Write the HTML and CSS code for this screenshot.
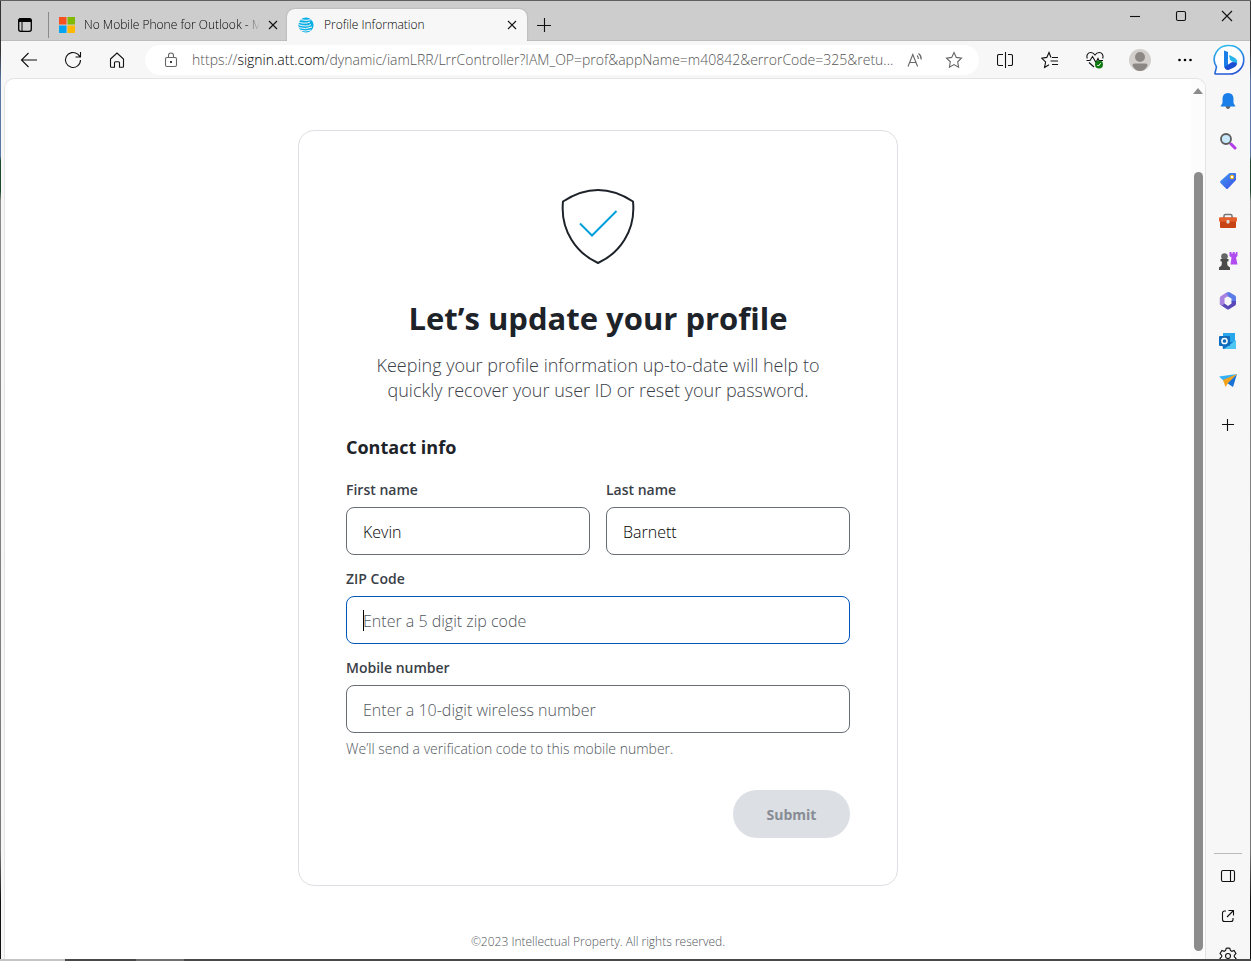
FILE: index.html
```html
<!doctype html>
<html lang="en">
<head>
	<meta charset="UTF-8">
	<title>Profile Information</title>
	<link rel="stylesheet" href="styles.css">
</head>
<body>
	<div class="window">
		<header class="titlebar">
			<button class="tab-menu" type="button" aria-label="Tab actions menu">
				<svg width="16" height="16" viewBox="0 0 16 16"><rect x="1.7" y="1.7" width="12.6" height="12.6" rx="2" fill="none" stroke="#000" stroke-width="1.3"/><path d="M1.5 5V3.2a2 2 0 0 1 2-2h9a2 2 0 0 1 2 2V5z"/><path d="M5 5v9" stroke="#000"/></svg>
			</button>
			<div class="tab">
				<svg width="16" height="16" viewBox="0 0 16 16"><path fill="#f65220" d="M0 0h7.5v7.5H0z"/><path fill="#80bb03" d="M8.500 0H16v7.500H8.500z"/><path fill="#04a4f0" d="M0 8.500h7.500V16H0z"/><path fill="#ffb902" d="M8.500 8.500H16V16H8.500z"/></svg>
				<span class="tab-title fade">No Mobile Phone for Outlook - M</span>
				<button type="button" aria-label="Close tab"><svg width="10" height="10" viewBox="0 0 10 10"><path class="line" d="M1 1l8 8M9 1L1 9"/></svg></button>
			</div>
			<div class="tab active">
				<svg width="16" height="16" viewBox="0 0 16 16"><defs><clipPath id="globe"><circle cx="8" cy="8" r="7.600"/></clipPath></defs><g clip-path="url(#globe)"><rect width="16" height="16" fill="#0aafe6"/><path fill="none" stroke="#f7f7f7" d="M2 2.600q6 1.500 12 0M-1 4.600q8 3 13 .4M0 7.500q9 3 13 0M0 10.500q8 2.500 14-.5M1 13q7 2 12 0"/></g></svg>
				<span class="tab-title">Profile Information</span>
				<button type="button" aria-label="Close tab"><svg width="10" height="10" viewBox="0 0 10 10"><path class="line" d="M1 1l8 8M9 1L1 9"/></svg></button>
			</div>
			<button class="new-tab" type="button" aria-label="New tab"><svg width="14" height="14" viewBox="0 0 14 14"><path class="line" d="M7.500 0v14M0 7.500h14"/></svg></button>
			<div class="window-buttons">
				<button type="button" aria-label="Minimize"><svg width="12" height="12" viewBox="0 0 12 12"><path class="line" d="M1 6.500h10"/></svg></button>
				<button type="button" aria-label="Maximize"><svg width="12" height="12" viewBox="0 0 12 12"><rect class="line" x="1.500" y="1.500" width="9" height="9" rx="1.500"/></svg></button>
				<button type="button" aria-label="Close"><svg width="12" height="12" viewBox="0 0 12 12"><path class="line" d="M1 1l10 10M11 1L1 11"/></svg></button>
			</div>
		</header>

		<nav class="toolbar">
			<button class="nav" type="button" aria-label="Back"><svg width="18" height="16" viewBox="0 0 18 16"><path class="line" d="M17 8H1.500M8.500 1L1.500 8l7 7"/></svg></button>
			<button class="nav" type="button" aria-label="Refresh"><svg width="18" height="18" viewBox="0 0 18 18"><path class="line" d="M16.500 9A7.500 7.500 0 1 1 13.800 3.200L16 5.500M16.500 1v5h-5"/></svg></button>
			<button class="nav" type="button" aria-label="Home"><svg width="16" height="16" viewBox="0 0 16 16"><path class="line" d="M1.500 7L8 1l6.500 6v7.500a.8.8 0 0 1-.8.8h-3.200v-4.500a1 1 0 0 0-1-1h-3a1 1 0 0 0-1 1v4.500H2.300a.8.8 0 0 1-.8-.8z"/></svg></button>
			<div class="address">
				<button type="button" aria-label="View site information"><svg width="14" height="16" viewBox="0 0 14 16"><rect class="line" x="1.500" y="5.500" width="11" height="9" rx="1.500"/><path class="line" d="M4.500 5.500V3.500a2.500 2.500 0 0 1 5 0v2"/><circle cx="7" cy="10" r="1"/></svg></button>
				<div class="url" role="textbox" aria-label="Address">https://<b>signin.att.com</b>/dynamic/iamLRR/LrrController?IAM_OP=prof&amp;appName=m40842&amp;errorCode=325&amp;retu...</div>
				<button type="button" aria-label="Read aloud"><svg width="16" height="16" viewBox="0 0 16 16"><path class="line" d="M1 14.500L5.800 2.500l4.800 12M2.700 10.500h6.200M10 3.500q1.500 1.200 1.300 3.500M11.500 1.500q3 2.300 2.700 6"/></svg></button>
				<button type="button" aria-label="Add to favorites"><svg width="18" height="18" viewBox="0 0 18 18"><path class="line" d="M9 1.500l2.300 4.900 5.200.7-3.800 3.700.9 5.400L9 13.600l-4.600 2.600.9-5.400-3.800-3.700 5.200-.7z"/></svg></button>
			</div>
			<button type="button" aria-label="Split screen"><svg width="16" height="16" viewBox="0 0 16 16"><path class="line" d="M8.500 0v16M6 2.500H2a1.500 1.500 0 0 0-1.500 1.500v8A1.500 1.500 0 0 0 2 13.500h4M11 2.500h3A1.500 1.500 0 0 1 15.500 4v8a1.500 1.500 0 0 1-1.500 1.500h-3"/></svg></button>
			<button type="button" aria-label="Favorites"><svg width="18" height="18" viewBox="0 0 18 18"><path class="line" d="M10 6.500L8 1.500 5.800 6.400.7 7.200l3.900 3.700-1 5.500L8 13.700M11 6.500h6M9.500 10h7.500M11 13.500h6"/></svg></button>
			<button type="button" aria-label="Browser essentials"><svg width="18" height="18" viewBox="0 0 18 18"><path class="line" d="M1.300 7.500C0 4 2 1.500 4.800 1.500 7 1.500 8.300 3 9 4c.7-1 2-2.500 4.200-2.500 2.800 0 4.500 2.500 3.500 6M.5 9.500h3.500l2.500-4 3.500 6 2-4 1 2h4M3 11.500l5 4.500"/><circle cx="13" cy="13.500" r="4" fill="#0f7b10"/><path d="M11.300 14l1 1 2.500-2.800" fill="none" stroke="#fff"/></svg></button>
			<button type="button" aria-label="Profile"><svg width="22" height="22" viewBox="0 0 22 22"><circle cx="11" cy="11" r="11" fill="#d2cfcc"/><circle cx="11" cy="8" r="5" fill="#8c8885"/><path fill="#8c8885" d="M3.500 16.500q0-2 2-2h11q2 0 2 2Q16 22 11 22t-7.500-5.500z"/></svg></button>
			<button type="button" aria-label="Settings and more"><svg width="14" height="4" viewBox="0 0 14 4"><circle cx="1.500" cy="2" r="1.300"/><circle cx="7" cy="2" r="1.300"/><circle cx="12.500" cy="2" r="1.300"/></svg></button>
			<button class="bing" type="button" aria-label="Bing"><svg width="32" height="32" viewBox="0 0 32 32"><defs><linearGradient id="bubble" x2="0.300" y2="1"><stop stop-color="#2bc3ee"/><stop offset="1" stop-color="#2757d8"/></linearGradient></defs><path fill="#fff" stroke="url(#bubble)" stroke-width="1.600" d="M16.500 1.500a14 14 0 1 1 0 28.500H2.500Q1.500 30 2 29l1.500-6A14 14 0 0 1 16.500 1.500z"/><path fill="#1c7fe8" d="M11 6.500l4 1.500v13l-1.500 4q-2.500-.5-2.500-4z"/><path fill="#27b6ec" d="M16 11.500q.500-.5 1.500 0l4.500 2.500q3 2 2 6l-5.500-3q-1-.5-1.500-1.500z"/><path fill="#1b50d2" d="M11.500 23l7.500-5q5 0 5 2-.5 2.500-3 3.500L16 25.800q-3.500 1-4.500-2.800z"/></svg></button>
		</nav>

		<div class="body">
			<div class="viewport">
				<main class="page">
					<form class="card">
						<svg class="shield" width="76" height="76" viewBox="0 0 76 76"><path fill="none" stroke="#1d2329" stroke-width="2" stroke-linejoin="round" d="M3 13.500Q38-9.500 73 13.500C76 43 59 65.500 38 75 17 65.500 0 43 3 13.500z"/><path fill="none" stroke="#009fdb" stroke-width="2" d="M20 35.500L32 47.500 56.500 23"/></svg>
						<h1>Let’s update your profile</h1>
						<p class="lead">Keeping your profile information up-to-date will help to<br>quickly recover your user ID or reset your password.</p>
						<h2>Contact info</h2>
						<div class="fields">
							<div class="field">
								<label for="first">First name</label>
								<input id="first" type="text" value="Kevin">
							</div>
							<div class="field">
								<label for="last">Last name</label>
								<input id="last" type="text" value="Barnett">
							</div>
							<div class="field wide focused">
								<label for="zip">ZIP Code</label>
								<input id="zip" type="text" placeholder="Enter a 5 digit zip code">
								<span class="caret"></span>
							</div>
							<div class="field wide">
								<label for="mobile">Mobile number</label>
								<input id="mobile" type="tel" placeholder="Enter a 10-digit wireless number">
							</div>
						</div>
						<p class="hint">We’ll send a verification code to this mobile number.</p>
						<button class="submit" type="submit" disabled>Submit</button>
					</form>
					<footer>©2023 Intellectual Property. All rights reserved.</footer>
				</main>
				<div class="scrollbar">
					<svg width="10" height="6" viewBox="0 0 10 6"><path fill="#8b8b8b" d="M5 0l5 6H0z"/></svg>
					<div class="thumb"></div>
				</div>
			</div>

			<aside class="sidebar">
				<button type="button" aria-label="Notifications"><svg width="18" height="18" viewBox="0 0 18 18"><path fill="#666" d="M6.500 14h5q-.5 3-2.500 3t-2.500-3z"/><path fill="#1b7fea" d="M9 1q5.500 0 5.500 6v4l2 3.500h-15L3.500 11V7q0-6 5.500-6z"/></svg></button>
				<button type="button" aria-label="Search"><svg width="18" height="18" viewBox="0 0 18 18"><path stroke="#b13be8" stroke-width="3" stroke-linecap="round" d="M12 12l4 4"/><circle cx="7" cy="7" r="5" fill="#c9e8fb" stroke="#5c5c5c" stroke-width="1.800"/></svg></button>
				<button type="button" aria-label="Shopping"><svg width="18" height="18" viewBox="0 0 18 18"><defs><linearGradient id="tag" y2="1"><stop stop-color="#3f9bf2"/><stop offset="1" stop-color="#3f4be8"/></linearGradient></defs><path fill="url(#tag)" d="M10.500 1H16q1 0 1 1v6L9 16.500q-1 1-2 0L1.500 11q-1-1 0-2z"/><circle cx="13" cy="5" r="1.800" fill="#fff" stroke="#f5b800"/></svg></button>
				<button type="button" aria-label="Tools"><svg width="18" height="16" viewBox="0 0 18 16"><path fill="none" stroke="#777" stroke-width="1.500" d="M5 5V3q0-1.500 1.500-1.500h5Q13 1.500 13 3v2"/><rect x="1" y="4.500" width="16" height="10.500" rx="1" fill="#c74315"/><path fill="#e4602c" d="M0 4.500h18v4H0z"/><rect x="7.500" y="7" width="3" height="3.500" rx="1" fill="#ddd"/></svg></button>
				<button type="button" aria-label="Games"><svg width="20" height="18" viewBox="0 0 20 18"><path fill="#b04cf0" d="M11.500 0h2v1.500h1.200V0h2v1.500h1.200V0h1.600v4L18 5.500l1.500 7h-7l1-7-2-1.500z"/><circle cx="6.500" cy="4.500" r="3.300" fill="#666"/><path fill="#4a4a4a" d="M2.500 7h8v2.500H9l.5 4 2.500 2V18H1v-2.500l2.500-2 .5-4H2.500z"/></svg></button>
				<button type="button" aria-label="Microsoft 365"><svg width="18" height="18" viewBox="0 0 18 18"><path fill="#5a7be8" d="M6.500 1L9 .2q1-.4 2 .2l5 3q1 .7 1 2v7l-4.500-3V6.500L8 4z"/><path fill="#a884e0" d="M7.500.6L2 4Q.8 5 .8 6v6.500l2 1.200 2.700-1.700V6.300L9 4z"/><path fill="#5848b8" d="M1 12.500l7 4.700q1 .6 2 0l6.500-4q.5-.8.5-4.200l-4.500 0v2.500L9 14l-3.500-2.500-2.500 2z"/></svg></button>
				<button type="button" aria-label="Outlook"><svg width="18" height="18" viewBox="0 0 18 18"><rect x="4" y="1" width="12" height="10" fill="#28a8ea"/><path fill="#1272c4" d="M3 10h14v7H4z"/><path fill="#4fc5f4" d="M9 14l8-6v8.500q0 .5-.5.5H5z"/><rect y="4" width="11" height="10" rx="1" fill="#0f6cbd"/><circle cx="5.500" cy="9" r="2.600" fill="none" stroke="#fff" stroke-width="1.500"/></svg></button>
				<button type="button" aria-label="Drop"><svg width="18" height="14" viewBox="0 0 18 14"><path fill="#35b0f5" d="M0 2.500L18 0 5 7z"/><path fill="#1672d8" d="M18 0l-4 13-6-4z"/><path fill="#f5a21b" d="M18 0L4 6l2.500 7L9 9z"/></svg></button>
				<button class="customize" type="button" aria-label="Customize"><svg width="12" height="12" viewBox="0 0 12 12"><path class="line" d="M5.500 0v12M0 5.500h12"/></svg></button>
				<div class="sidebar-end">
					<hr>
					<button type="button" aria-label="Hide sidebar"><svg width="16" height="14" viewBox="0 0 16 14"><rect class="line" x="1.500" y="1.500" width="13" height="11" rx="1.500"/><path class="line" d="M10.500 1.500v11"/></svg></button>
					<button type="button" aria-label="Open link"><svg width="14" height="14" viewBox="0 0 14 14"><path class="line" d="M5 2H3.500a2 2 0 0 0-2 2v6.500a2 2 0 0 0 2 2H10a2 2 0 0 0 2-2V9M7.500 1.500h5v5M12.500 1.500L6 8"/></svg></button>
					<button type="button" aria-label="Settings"><svg width="18" height="18" viewBox="0 0 18 18"><path class="line" d="M9 1l1.800.3.6 2.200 1.500.8 2.200-.8L17 6.600l-1.700 1.600v1.600L17 11.400l-1.900 3.100-2.200-.8-1.500.8-.6 2.200H7.200l-.6-2.200-1.500-.8-2.200.8L1 11.400l1.700-1.600V8.200L1 6.600l1.900-3.100 2.200.8 1.500-.8.600-2.200z"/><circle class="line" cx="9" cy="9" r="2.500"/></svg></button>
				</div>
			</aside>
		</div>
		<div class="bottom-edge"></div>
	</div>
</body>
</html>
```
FILE: styles.css
```css
*{
	box-sizing: border-box;
}
body{
	margin: 0;
	height: 100vh;
	padding-bottom: 18px;
	background: #fff;
	font-family: "Open Sans", "Noto Sans", sans-serif;
	font-weight: 330;
	overflow: hidden;
}
h1,h2,p{
	margin: 0;
}
button{
	display: flex;
	align-items: center;
	justify-content: center;
	flex-shrink: 0;
	padding: 0;
	border: 0;
	background: none;
	font-family: inherit;
	color: #111;
}
svg{
	display: block;
	flex-shrink: 0;
}
.line{
	fill: none;
	stroke: currentColor;
	stroke-width: 1.1;
}
.window{
	display: flex;
	flex-direction: column;
	height: 100%;
	padding: 0 1px;
	border-top: 1px solid #625f62;
	background: linear-gradient(#333 50px, #5a78a5 80px, #5a78a5 155px, #1d4a2c 160px, #1d4a2c 190px, #8a8a8a 200px, #777 850px, #111 900px);
}

/* tabs */
.titlebar{
	display: flex;
	height: 40px;
	flex-shrink: 0;
	background: #cdcdcd;
	border-bottom: 1px solid #bdbdbd;
}
.tab-menu{
	width: 47px;
	padding-top: 8px;
}
.tab{
	display: flex;
	align-items: center;
	gap: 10px;
	width: 240px;
	height: 32px;
	margin-top: 8px;
	padding: 0 8px 0 11px;
	font-size: 12px;
	line-height: 18px;
	color: #000;
}
.tab:not(.active){
	gap: 9px;
	width: 239px;
	height: 26px;
	margin-top: 11px;
	padding: 0 7px 0 10px;
	border-left: 1px solid #8a8a8a;
}
.tab.active{
	background: #f7f7f7;
	border-radius: 8px 8px 0 0;
	box-shadow: 0 0 2px #999;
	clip-path: inset(-3px -3px 0 -3px);
}
.tab-title{
	flex: 1;
	white-space: nowrap;
	overflow: hidden;
}
.fade{
	margin-right: -4px;
	-webkit-mask-image: linear-gradient(to left, transparent, #000 14px);
	mask-image: linear-gradient(to left, transparent, #000 14px);
}
.tab button{
	width: 15px;
	height: 16px;
}
.new-tab{
	width: 34px;
	padding-top: 8px;
}
.window-buttons{
	display: flex;
	height: 30px;
	margin-left: auto;
}
.window-buttons button{
	width: 46px;
}

/* toolbar */
.toolbar{
	display: flex;
	align-items: center;
	height: 37px;
	flex-shrink: 0;
	padding-left: 6px;
	background: #f7f7f7;
}
.toolbar > button{
	width: 45px;
	height: 36px;
}
.toolbar > .nav{
	width: 44px;
}
.toolbar > .bing{
	width: 43px;
}
.address{
	display: flex;
	align-items: center;
	flex: 1;
	min-width: 0;
	height: 30px;
	margin: 0 3px 0 6px;
	padding: 0 6px;
	border-radius: 15px;
	background: #fff;
}
.address button{
	width: 39px;
	height: 30px;
	color: #666;
}
.url{
	flex: 1;
	margin: 0 0 0 2px;
	font-size: 14px;
	font-weight: 300;
	line-height: 20px;
	color: #555;
	white-space: nowrap;
}
.url b{
	font-weight: inherit;
	color: #000;
}

/* page area */
.body{
	display: flex;
	flex: 1;
	min-height: 0;
	background: #f7f7f7;
}
.viewport{
	display: flex;
	flex: 1;
	margin-left: 3px;
	border: 1px solid #e4e4e4;
	border-bottom: 0;
	border-radius: 10px 10px 0 0;
	background: #fff;
	overflow: hidden;
}
.page{
	flex: 1;
	padding-top: 51px;
}
.scrollbar{
	display: flex;
	flex-direction: column;
	align-items: center;
	width: 14px;
	padding: 9px 0 8px;
	background: #fcfcfc;
}
.thumb{
	flex: 1;
	width: 9px;
	margin-top: 78px;
	border-radius: 5px;
	background: #8b8b8b;
}

/* profile form */
.card{
	max-width: 600px;
	margin: 0 auto;
	padding: 57px 47px 47px;
	border: 1px solid #dcdfe3;
	border-radius: 16px;
	color: #1d2329;
}
.shield{
	margin: 0 auto 34px;
}
h1{
	font-size: 31px;
	line-height: 40px;
	font-weight: 700;
	text-align: center;
}
.lead{
	margin: 15px 0 30px;
	font-size: 18px;
	font-weight: 350;
	line-height: 25px;
	text-align: center;
	color: #3a4047;
}
h2{
	margin-bottom: 19px;
	font-size: 18px;
	line-height: 28px;
	font-weight: 700;
}
.fields{
	display: grid;
	grid-template-columns: 1fr 1fr;
	gap: 14px 16px;
}
.field{
	position: relative;
}
.wide{
	grid-column: 1 / 3;
}
label{
	display: block;
	margin-bottom: 7px;
	font-size: 14px;
	line-height: 20px;
	font-weight: 600;
	color: #3a4047;
}
input{
	display: block;
	width: 100%;
	height: 48px;
	padding: 2px 16px 0;
	border: 1px solid #686e74;
	border-radius: 8px;
	background: #fff;
	font-family: inherit;
	font-size: 16px;
	font-weight: inherit;
	color: #000;
}
input::placeholder{
	color: #50565c;
}
.focused input{
	border-color: #0057b8;
}
.caret{
	position: absolute;
	left: 17px;
	bottom: 13px;
	width: 1px;
	height: 21px;
	background: #000;
}
.hint{
	margin: 6px 0 31px;
	font-size: 14px;
	line-height: 20px;
	color: #50565c;
}
.submit{
	width: 117px;
	height: 48px;
	margin-left: auto;
	border-radius: 24px;
	background: #dcdfe3;
	font-size: 14px;
	font-weight: 700;
	color: #878c94;
}
footer{
	margin-top: 46px;
	font-size: 12px;
	line-height: 20px;
	text-align: center;
	color: #50565c;
}

/* sidebar */
.sidebar{
	display: flex;
	flex-direction: column;
	width: 44px;
	padding-top: 3px;
	overflow: hidden;
}
.sidebar button{
	width: 44px;
	height: 40px;
}
.sidebar .customize{
	margin-top: 4px;
}
.sidebar-end{
	margin: auto 0 -17px;
}
.sidebar hr{
	margin: 0 8px 2px;
	border: 0;
	border-top: 1px solid #bbb;
}
.bottom-edge{
	height: 2px;
	flex-shrink: 0;
	margin: 0 -1px;
	background: linear-gradient(to right, #c4c4c4 65px, #484848 65px, #484848 136px, #707070 136px, #707070 184px, #484848 184px);
}
```
